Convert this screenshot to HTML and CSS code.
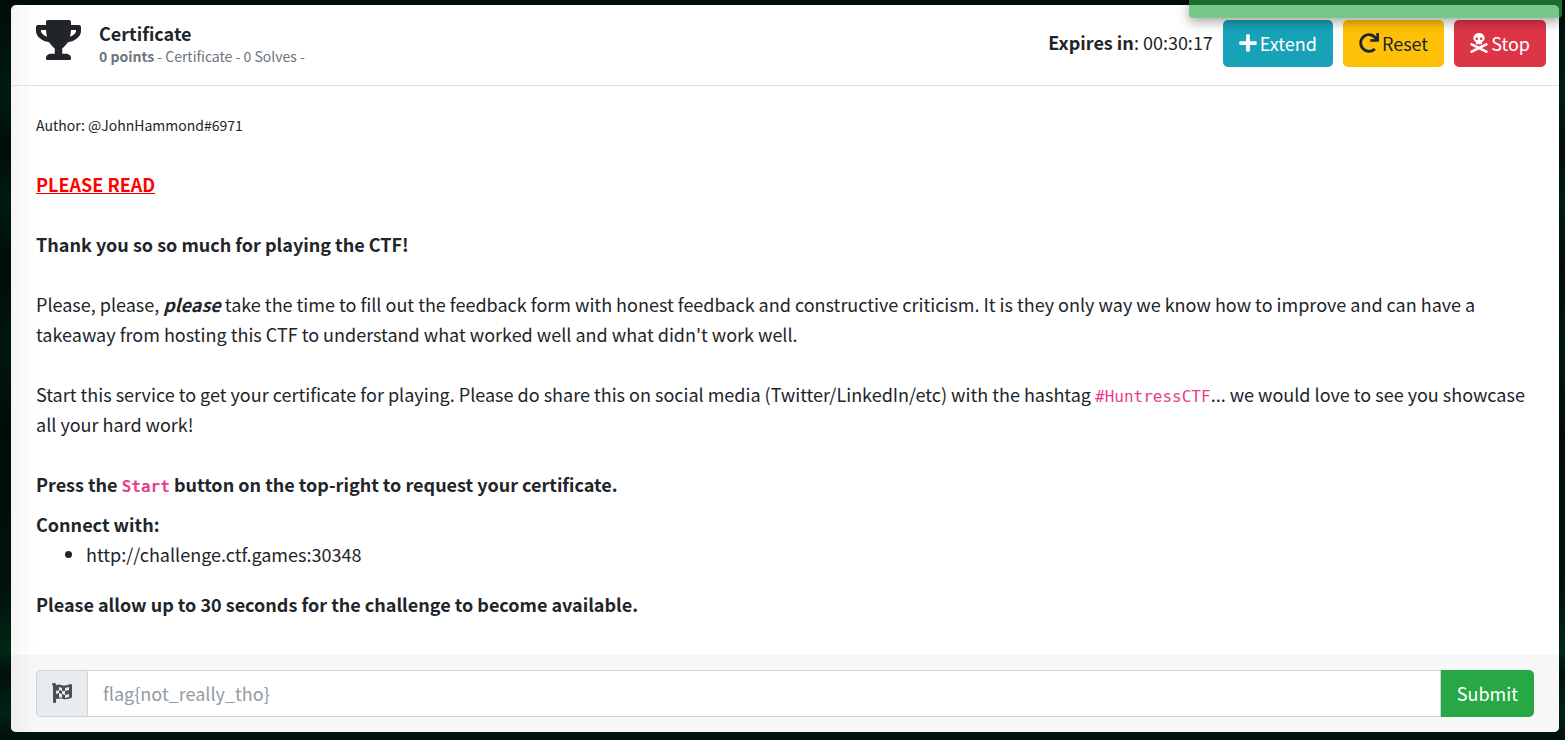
FILE: index.html
```html
<!DOCTYPE html>
<html lang="en">
<head>
<meta charset="utf-8">
<title>Certificate</title>
<link rel="stylesheet" href="styles.css">
</head>
<body>
<div class="toast" role="status"></div>
<main class="card">
  <header class="card-header">
    <svg class="trophy" viewBox="0 0 576 512" aria-hidden="true"><path d="M552 64H448V24c0-13.300-10.700-24-24-24H152c-13.300 0-24 10.700-24 24v40H24C10.700 64 0 74.700 0 88v56c0 35.700 22.500 72.500 61.900 100.700 31.500 22.700 69.800 37.100 110 41.700C203.300 338.500 240 360 240 360v72h-48c-35.300 0-64 20.700-64 56v12c0 6.600 5.400 12 12 12h296c6.600 0 12-5.400 12-12v-12c0-35.300-28.700-56-64-56h-48v-72s36.700-21.500 68.100-73.600c40.300-4.600 78.600-19 110-41.700 39.300-28.300 61.900-65 61.900-100.700V88c0-13.300-10.700-24-24-24zM99.300 192.800C74.900 175.200 64 155.600 64 144v-16h64.200c1 32.600 5.800 61.200 12.800 86.200-15.100-5.200-29.200-12.400-41.700-21.400zM512 144c0 16.100-17.700 36.100-35.300 48.800-12.500 9-26.700 16.200-41.800 21.400 7-25 11.800-53.600 12.800-86.200H512v16z"/></svg>
    <div class="heading">
      <h1 class="title">Certificate</h1>
      <p class="meta"><b>0 points</b> - Certificate - 0 Solves -</p>
    </div>
    <p class="timer"><b>Expires in</b>: 00:30:17</p>
    <div class="actions">
      <button class="btn btn-info" type="button"><svg class="icon icon-narrow" viewBox="0 0 448 512" aria-hidden="true"><path d="M416 208H272V64c0-17.670-14.330-32-32-32h-32c-17.670 0-32 14.330-32 32v144H32c-17.670 0-32 14.330-32 32v32c0 17.670 14.330 32 32 32h144v144c0 17.670 14.330 32 32 32h32c17.670 0 32-14.330 32-32V304h144c17.670 0 32-14.330 32-32v-32c0-17.670-14.330-32-32-32z"/></svg>Extend</button>
      <button class="btn btn-warning" type="button"><svg class="icon" viewBox="0 0 512 512" aria-hidden="true"><path d="M500.330 0h-47.410a12 12 0 0 0-12 12.570l4 82.760A247.420 247.420 0 0 0 256 8C119.340 8 7.900 119.530 8 256.190 8.100 393.070 119.100 504 256 504a247.100 247.100 0 0 0 166.180-63.910 12 12 0 0 0 .48-17.430l-34-34a12 12 0 0 0-16.380-.55A176 176 0 1 1 402.100 157.800l-101.530-4.870a12 12 0 0 0-12.570 12v47.410a12 12 0 0 0 12 12h200.330a12 12 0 0 0 12-12V12a12 12 0 0 0-12-12z"/></svg>Reset</button>
      <button class="btn btn-danger" type="button"><svg class="icon icon-narrow" viewBox="0 0 448 512" aria-hidden="true"><path d="M439.150 453.060L297.170 384l141.990-69.060c7.900-3.950 11.110-13.560 7.150-21.460L432 264.850c-3.950-7.900-13.560-11.110-21.470-7.160L224 348.410 37.470 257.690c-7.900-3.950-17.510-.75-21.470 7.160L1.690 293.480c-3.950 7.900-.75 17.510 7.150 21.460L150.830 384 8.850 453.060c-7.900 3.950-11.110 13.560-7.150 21.470l14.310 28.630c3.950 7.900 13.560 11.110 21.470 7.150L224 419.590l186.530 90.720c7.900 3.950 17.510.75 21.470-7.150l14.310-28.630c3.950-7.910.74-17.520-7.160-21.470zM150 237.280l-5.480 25.870c-2.670 12.620 5.420 24.850 16.450 24.850h126.080c11.030 0 19.120-12.230 16.450-24.850l-5.500-25.870c41.780-22.410 70-62.750 70-109.280C368 57.310 303.530 0 224 0S80 57.310 80 128c0 46.530 28.220 86.870 70 109.280zM280 112c17.650 0 32 14.370 32 32s-14.350 32-32 32-32-14.350-32-32 14.350-32 32-32zm-112 0c17.650 0 32 14.370 32 32s-14.350 32-32 32-32-14.350-32-32 14.350-32 32-32z"/></svg>Stop</button>
    </div>
  </header>
  <section class="card-body">
    <p class="author">Author: @JohnHammond#6971</p>
    <p class="notice"><b>PLEASE READ</b></p>
    <p><b>Thank you so so much for playing the CTF!</b></p>
    <p>Please, please, <b><i>please</i></b> take the time to fill out the feedback form with honest feedback and constructive criticism. It is they only way we know how to improve and can have a takeaway from hosting this CTF to understand what worked well and what didn't work well.</p>
    <p>Start this service to get your certificate for playing. Please do share this on social media (Twitter/LinkedIn/etc) with the hashtag <code>#HuntressCTF</code>... we would love to see you showcase all your hard work!</p>
    <p><b>Press the <code>Start</code> button on the top-right to request your certificate.</b></p>
    <div class="connect">
      <b>Connect with:</b>
      <ul class="hosts"><li>http://challenge.ctf.games:30348</li></ul>
      <b>Please allow up to 30 seconds for the challenge to become available.</b>
    </div>
  </section>
  <form class="card-footer">
    <label class="addon" for="flag" aria-label="Flag">
      <svg class="icon" viewBox="0 0 20 20" aria-hidden="true"><path fill-rule="evenodd" d="M1 0h2l1 1v1c5-2 6 2 11 0l4-1q1 0 1 1v12q0 1-1 1c-7 3-8-1-15 1v3q0 1-1 1H2q-1 0-1-1V3Q-1 1 1 0zM7 4v3l3 1V5zM13 5v3l4-1V4zM4 8v3l3-1V7zM10 8v3l3 1V8zM7 10v4l3 1v-4zM13 12v3l4-1v-3z"/></svg>
    </label>
    <input class="flag-input" id="flag" type="text" placeholder="flag{not_really_tho}">
    <button class="submit" type="submit">Submit</button>
  </form>
</main>
</body>
</html>
```
FILE: styles.css
```css
* { box-sizing: border-box; }
body {
  margin: 0;
  padding: 5px 6px 7px 11px;
  min-height: 100vh;
  background: linear-gradient(#000c09, #001b13 13%, #000c09 20%, #001a14 27%, #000c09 36%, #00170c 47%, #000c09 58%, #00120d 80%, #002814 88%, #000f0b 91%, #00221a 96%, #000f0b);
  color: #212529;
  font: 18px/30px "Noto Sans CJK JP", "Open Sans", sans-serif;
}
p, h1 { margin: 0; }
.toast {
  position: absolute;
  top: 0;
  right: 3px;
  width: 373px;
  height: 18px;
  border-radius: 0 0 4px 4px;
  background: rgba(40, 167, 69, .64);
  box-shadow: 0 4px 12px rgba(0, 0, 0, .35);
}
.card {
  border-radius: 5px;
  background: #fff;
  overflow: hidden;
}
.card-header, .card-body, .card-footer {
  background-image: linear-gradient(to right, rgba(0, 0, 0, .04), transparent 25px);
}
.card-header {
  display: flex;
  align-items: flex-start;
  padding: 15px 13px 18px 25px;
  border-bottom: 1px solid #dfdfdf;
}
.trophy { width: 45px; height: 40px; fill: #212529; }
.heading { flex: 1; padding-left: 18px; }
.title { font-size: 18px; line-height: 26px; font-weight: 700; }
.meta { font-size: 14px; line-height: 21px; color: #6c757d; }
.timer { padding: 7px 10px 0 0; }
.actions { display: flex; gap: 10px; }
.btn {
  display: flex;
  align-items: center;
  gap: 3px;
  height: 47px;
  padding: 0 16px 2px;
  border: 0;
  border-radius: 5px;
  color: #fff;
  font: inherit;
}
.icon { width: 20px; height: 20px; fill: currentColor; }
.icon-narrow { width: 18px; }
.btn-info { background: #17a2b8; }
.btn-warning { background: #ffc107; color: #212529; }
.btn-danger { background: #dc3545; }
.card-body {
  display: flex;
  flex-direction: column;
  gap: 30px;
  padding: 25px 25px 36px;
}
.author { font-size: 14px; line-height: 28px; }
.notice { color: #f00; text-decoration: underline; }
code { color: #e83e8c; font: 16px "DejaVu Sans Mono", monospace; }
b code { font-weight: 700; }
.connect { margin-top: -20px; }
.hosts { margin: 0 0 20px; padding-left: 50px; }
.card-footer {
  display: flex;
  padding: 15px 25px;
  background-color: #f7f7f7;
}
.addon {
  display: flex;
  align-items: center;
  padding: 0 15px 2px;
  border: 1px solid #ced4da;
  border-right: 0;
  border-radius: 5px 0 0 5px;
  background: #e9ecef;
  color: #495057;
}
.flag-input {
  flex: 1;
  min-width: 0;
  height: 47px;
  padding: 0 15px 1px;
  border: 1px solid #ced4da;
  border-radius: 0;
  font: inherit;
}
.flag-input::placeholder { color: #939ba2; }
.submit {
  padding: 0 16px 1px;
  border: 0;
  border-radius: 0 5px 5px 0;
  background: #28a745;
  color: #fff;
  font: inherit;
}
```
